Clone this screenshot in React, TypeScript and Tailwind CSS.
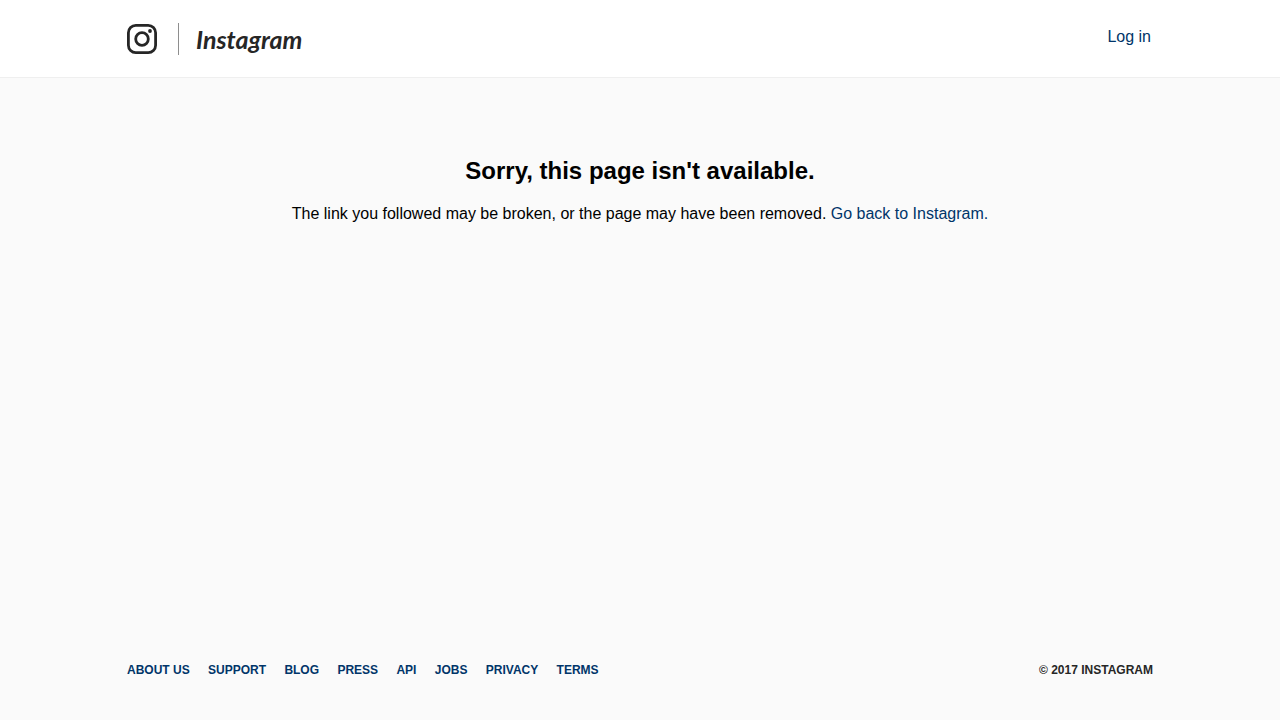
import { Fragment } from "react";

const footerLinks = ["About us", "Support", "Blog", "Press", "API", "Jobs", "Privacy", "Terms"];

function CameraIcon() {
  return (
    <svg viewBox="0 0 30 30" className="size-[30px]" fill="none" stroke="#262626" aria-hidden="true">
      <rect x="1.4" y="1.4" width="27.2" height="27.2" rx="7.4" strokeWidth="2.8" />
      <circle cx="15" cy="15" r="6.3" strokeWidth="2.8" />
      <circle cx="23" cy="7" r="1.9" fill="#262626" stroke="none" />
    </svg>
  );
}

function Header() {
  return (
    <header className="border-b border-[#efefef] bg-white px-5">
      <div className="mx-auto flex h-[77px] max-w-[1026px] items-center justify-between">
        <a href="#home" className="flex items-center text-[#262626]">
          <CameraIcon />
          <span className="ml-[21px] h-8 w-px bg-[#8e8e8e]" />
          <span className="ml-[17px] font-['Lato',sans-serif] text-[25px] leading-8 font-bold italic">
            Instagram
          </span>
        </a>
        <a href="#login" className="mr-[2px] mb-1 text-base text-[#003569]">
          Log in
        </a>
      </div>
    </header>
  );
}

export default function App() {
  return (
    <div className="flex min-h-screen flex-col bg-[#fafafa] font-['Liberation_Sans',Arial,sans-serif]">
      <Header />
      <main className="grow px-10 pt-[77px] text-center text-black">
        <h1 className="text-2xl leading-8 font-bold">Sorry, this page isn't available.</h1>
        <p className="mt-[15px] text-base">
          The link you followed may be broken, or the page may have been removed.{" "}
          <a href="#home" className="text-[#003569]">
            Go back to Instagram.
          </a>
        </p>
      </main>
      <footer className="px-5 pb-[41px] text-xs leading-[18px] font-bold uppercase">
        <div className="mx-auto flex max-w-[1026px] flex-wrap justify-between">
          <nav aria-label="Footer">
            <ul>
              {footerLinks.map((label) => (
                <Fragment key={label}>
                  <li className="mr-[15px] inline-block align-top">
                    <a href="#footer" className="text-[#003569]">
                      {label}
                    </a>
                  </li>{" "}
                </Fragment>
              ))}
            </ul>
          </nav>
          <span className="text-[#262626]">© 2017 Instagram</span>
        </div>
      </footer>
    </div>
  );
}
